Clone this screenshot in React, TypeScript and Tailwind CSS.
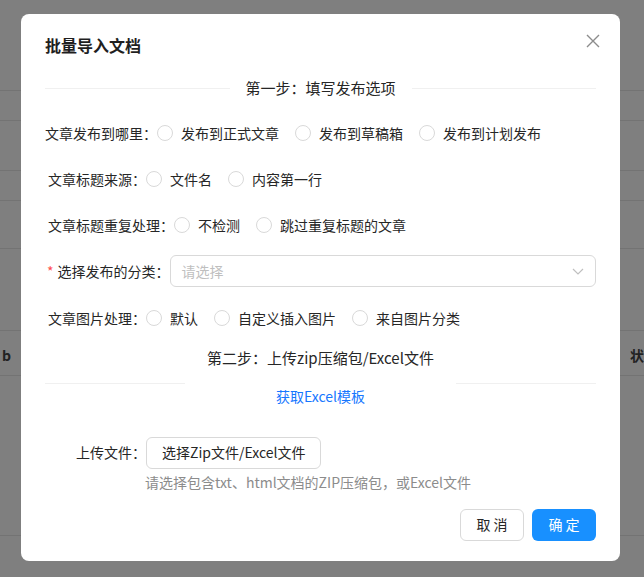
import React from "react";

const Radio = ({ label }: { label: string }) => (
  <span className="flex items-center mr-[16px]">
    <span className="w-[16px] h-[16px] rounded-full border border-[#d9d9d9] bg-white mr-[8px]" />
    <span>{label}</span>
  </span>
);

export default function App() {
  const lines = [90, 120, 170, 200, 248, 330, 375, 535];
  return (
    <div
      className="relative w-[644px] h-[577px] bg-[#7f7f7f] overflow-hidden text-[14px] text-[#262626]"
      style={{ fontFamily: '"Noto Sans CJK SC", "Noto Sans", sans-serif' }}
    >
      {lines.map((y) => (
        <div key={y} className="absolute left-0 right-0 h-px bg-[#737373]" style={{ top: y }} />
      ))}
      <div className="absolute left-[2px] top-[345px] text-[14px] font-bold text-[#222]">b</div>
      <div className="absolute left-[630px] top-[345px] text-[14px] font-bold text-[#222]">状</div>

      <div className="absolute left-[21px] top-[14px] w-[599px] h-[547px] bg-white rounded-[8px] px-[24px]">
        <div className="flex items-center h-[60px] pt-[2px]">
          <span className="text-[16px] font-bold text-[#1f1f1f]">批量导入文档</span>
        </div>
        <svg className="absolute right-[20px] top-[20px]" width="14" height="14" viewBox="0 0 14 14">
          <path d="M1 1L13 13M13 1L1 13" stroke="#8c8c8c" strokeWidth="1.4" />
        </svg>

        <div className="flex items-center h-[28px] mt-[0px]">
          <div className="flex-1 h-px bg-[#f0f0f0]" />
          <span className="px-[16px] text-[15px]">第一步：填写发布选项</span>
          <div className="flex-1 h-px bg-[#f0f0f0]" />
        </div>

        <div className="flex items-center h-[32px] mt-[15px]">
          <span>文章发布到哪里：</span>
          <Radio label="发布到正式文章" />
          <Radio label="发布到草稿箱" />
          <Radio label="发布到计划发布" />
        </div>
        <div className="flex items-center h-[32px] mt-[14px] pl-[3px]">
          <span>文章标题来源：</span>
          <Radio label="文件名" />
          <Radio label="内容第一行" />
        </div>
        <div className="flex items-center h-[32px] mt-[14px] pl-[3px]">
          <span>文章标题重复处理：</span>
          <Radio label="不检测" />
          <Radio label="跳过重复标题的文章" />
        </div>
        <div className="flex items-center h-[32px] mt-[14px] pl-[2px]">
          <span><span className="text-[#ff4d4f] mr-[4px]">*</span>选择发布的分类：</span>
          <div className="flex-1 h-[32px] border border-[#d9d9d9] rounded-[6px] flex items-center justify-between px-[11px]">
            <span className="text-[#bfbfbf]">请选择</span>
            <svg width="12" height="12" viewBox="0 0 12 12">
              <path d="M1 4L6 9L11 4" stroke="#bfbfbf" strokeWidth="1.2" fill="none" />
            </svg>
          </div>
        </div>
        <div className="flex items-center h-[32px] mt-[15px] pl-[3px]">
          <span>文章图片处理：</span>
          <Radio label="默认" />
          <Radio label="自定义插入图片" />
          <Radio label="来自图片分类" />
        </div>

        <div className="flex justify-center mt-[13px] text-[15px]">
          <span>第二步：上传zip压缩包/Excel文件</span>
        </div>
        <div className="flex items-center h-[24px] mt-[2px]">
          <div className="w-[140px] h-px bg-[#f0f0f0]" />
          <div className="flex-1 flex justify-center translate-y-[13px]">
            <span className="text-[#1677ff]">获取Excel模板</span>
          </div>
          <div className="w-[140px] h-px bg-[#f0f0f0]" />
        </div>

        <div className="flex items-center mt-[41px] pl-[31px]">
          <span>上传文件：</span>
          <div className="h-[32px] px-[15px] border border-[#d9d9d9] rounded-[6px] flex items-center">选择Zip文件/Excel文件</div>
        </div>
        <div className="pl-[100px] mt-[2px] text-[#8c8c8c] h-[24px] flex items-center">请选择包含txt、html文档的ZIP压缩包，或Excel文件</div>

        <div className="flex justify-end gap-[8px] mt-[14px]">
          <div className="h-[32px] w-[64px] border border-[#d9d9d9] rounded-[6px] flex items-center justify-center">取 消</div>
          <div className="h-[32px] w-[64px] bg-[#1890ff] text-white rounded-[6px] flex items-center justify-center">确 定</div>
        </div>
      </div>
    </div>
  );
}
